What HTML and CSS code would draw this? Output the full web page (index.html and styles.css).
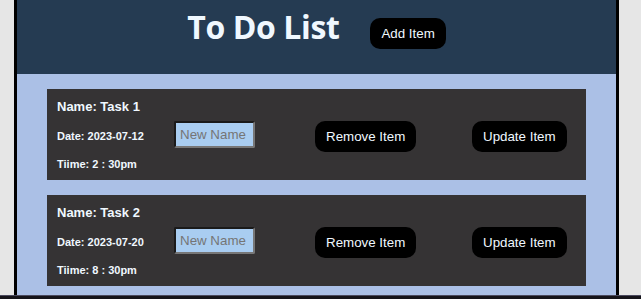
FILE: index.html
```html
<!DOCTYPE html>
<html>
<head>
<meta charset="utf-8">
<link rel="stylesheet" href="styles.css">
</head>
<body>
<div class="app">
  <header class="header">
    <h1 class="title">To Do List</h1>
    <button class="btn">Add Item</button>
  </header>
  <main class="list">
    <div class="card">
      <div class="name">Name: Task 1</div>
      <div class="row">
        <div class="meta date">Date: 2023-07-12</div>
        <input class="field" type="text" placeholder="New Name">
        <button class="btn">Remove Item</button>
        <button class="btn">Update Item</button>
      </div>
      <div class="meta time">Tiime: 2 : 30pm</div>
    </div>
    <div class="card">
      <div class="name">Name: Task 2</div>
      <div class="row">
        <div class="meta date">Date: 2023-07-20</div>
        <input class="field" type="text" placeholder="New Name">
        <button class="btn">Remove Item</button>
        <button class="btn">Update Item</button>
      </div>
      <div class="meta time">Tiime: 8 : 30pm</div>
    </div>
  </main>
</div>
<div class="footer"></div>
</body>
</html>
```

FILE: styles.css
```css
html, body {
  margin: 0;
  padding: 0;
}
body {
  background: #e6e6e6;
  font-family: "Liberation Sans", Arial, sans-serif;
  height: 299px;
  overflow: hidden;
}
.app {
  margin-left: 14px;
  width: 599px;
  border-left: 3px solid #000;
  border-right: 3px solid #000;
  height: 295px;
  background: #abc0e6;
  overflow: hidden;
}
.header {
  background: #253b52;
  height: 74px;
  display: flex;
  align-items: flex-start;
  justify-content: center;
  gap: 31px;
}
.title {
  margin: 7px 0 0 0;
  font-family: "Open Sans", sans-serif;
  font-weight: 700;
  font-size: 32px;
  line-height: 40px;
  color: #f0f8ff;
  letter-spacing: -0.4px;
}
.header .btn {
  margin-top: 18px;
}
.btn {
  background: #000;
  color: #f0f8ff;
  border: none;
  border-radius: 10px;
  font-family: "Liberation Sans", Arial, sans-serif;
  font-size: 13.33px;
  line-height: 15px;
  padding: 8px 11px;
  height: 31px;
}
.list {
  padding: 15px 30px 0 30px;
  display: flex;
  flex-direction: column;
  gap: 15px;
}
.card {
  background: #353334;
  color: #f0f8ff;
  padding: 10px 10px 9px 10px;
  height: 91px;
  box-sizing: border-box;
}
.name {
  font-weight: 700;
  font-size: 13px;
  line-height: 15px;
}
.row {
  margin-top: 7px;
  display: grid;
  grid-template-columns: 117px 141px 157px auto;
  align-items: start;
  justify-items: start;
  height: 31px;
}
.meta {
  font-weight: 700;
  font-size: 11px;
  line-height: 13px;
}
.date {
  margin-top: 9px;
}
.time {
  margin-top: 6px;
}
.field {
  box-sizing: border-box;
  width: 81px;
  height: 27px;
  margin: 0;
  padding: 0 3px 0 4px;
  background: #a9cdf1;
  border: 2px solid;
  border-color: #1a1a1a #777 #777 #1a1a1a;
  border-radius: 2px;
  font-family: "Liberation Sans", Arial, sans-serif;
  font-size: 13.33px;
  color: #222;
}
.field::placeholder {
  color: #757575;
}
.footer {
  height: 4px;
  background: #15141a;
  border-top: 1px solid #4b4a5e;
}
```
